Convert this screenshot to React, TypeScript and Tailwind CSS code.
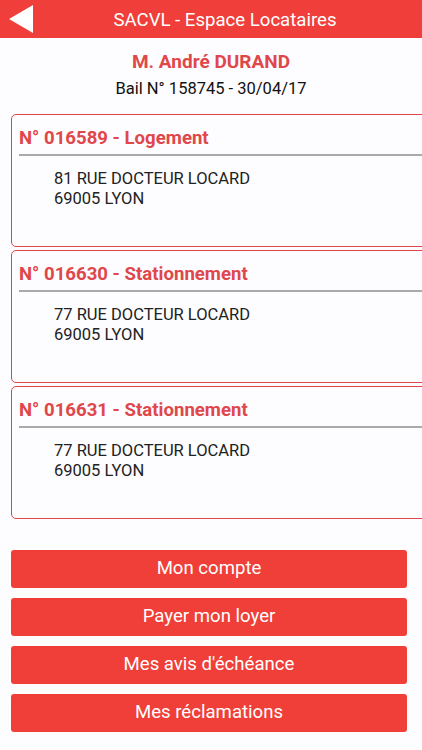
const biens = [
  { titre: 'N° 016589 - Logement', rue: '81 RUE DOCTEUR LOCARD', ville: '69005 LYON' },
  { titre: 'N° 016630 - Stationnement', rue: '77 RUE DOCTEUR LOCARD', ville: '69005 LYON' },
  { titre: 'N° 016631 - Stationnement', rue: '77 RUE DOCTEUR LOCARD', ville: '69005 LYON' },
]

const actions = ['Mon compte', 'Payer mon loyer', "Mes avis d'échéance", 'Mes réclamations']

export default function App() {
  return (
    <div className="w-[422px] h-[750px] overflow-hidden bg-[#fdfcff] font-['Roboto',sans-serif]">
      {/* Header */}
      <div className="h-[38px] bg-[#f03e3a] flex items-center">
        <button className="w-[42px] h-full flex items-center pl-[9px]">
          <svg width="25" height="28" viewBox="0 0 25 28">
            <polygon points="0,14 24,0 24,28" fill="#ffffff" />
          </svg>
        </button>
        <h1 className="flex-1 text-center text-white text-[18.6px] pr-[14px] pt-[2px] leading-none">SACVL - Espace Locataires</h1>
      </div>

      {/* Locataire */}
      <div className="text-center pt-[12px]">
        <p className="text-[#e0474a] font-bold text-[19px] leading-[24px]">M. André DURAND</p>
        <p className="text-[#111] text-[16.5px] leading-[20px] mt-[5px]">Bail N° 158745 - 30/04/17</p>
      </div>

      {/* Biens */}
      <div className="pl-[11px] mt-[15px] flex flex-col gap-[3px]">
        {biens.map((b) => (
          <div key={b.titre} className="h-[133px] -mr-[10px] border-[1.5px] border-[#e0434a] rounded-[5px] pl-[7px] pt-[11px]">
            <h2 className="text-[#e0474a] font-bold text-[18.6px] leading-[24px]">{b.titre}</h2>
            <div className="h-[2px] bg-[#a9a9a9] mt-[4px]" />
            <div className="pl-[35px] pt-[13px] text-[16.5px] leading-[20px] text-[#222]">
              <p>{b.rue}</p>
              <p>{b.ville}</p>
            </div>
          </div>
        ))}
      </div>

      {/* Actions */}
      <div className="px-[11px] pr-[15px] mt-[31px] flex flex-col gap-[10px]">
        {actions.map((a) => (
          <button key={a} className="h-[38px] w-full bg-[#f03e38] rounded-[3px] text-white text-[18.6px]">
            {a}
          </button>
        ))}
      </div>
    </div>
  )
}
